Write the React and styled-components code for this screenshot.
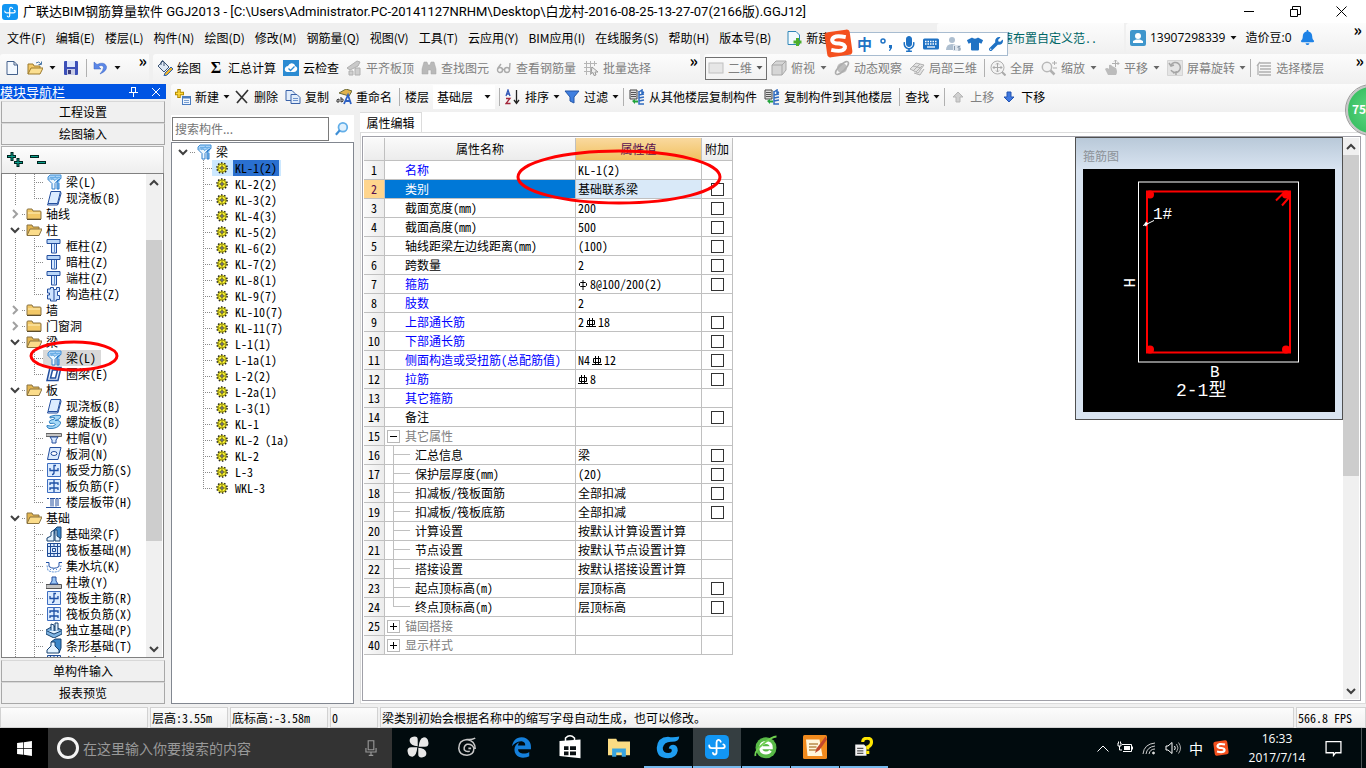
import React, { useState } from "react"
import styled, { createGlobalStyle, css } from "styled-components"
import {
  FaBell,
  FaEdgeLegacy,
  FaMicrophone,
  FaTshirt,
  FaWindows,
  FaWrench,
} from "react-icons/fa"

const song = css`
  font-family: "Noto Sans CJK SC", sans-serif;
  font-feature-settings: "hwid";
`

const dots = "#8a8a8a"

/* ---------- icons ---------- */

const glyphs = {
  app: (
    <>
      <rect width="16" height="16" rx="3" fill="#1296f3" />
      <path d="M10.500 4.500Q10 3 8.800 3.300 7.700 3.600 7.700 5V11.500Q7.700 13 6.500 13 5.500 13 5.300 12M2.800 7Q2.800 8.800 4.500 8.800H11.500Q13.200 8.800 13.200 7.500 13.200 6.500 12.200 6.300" fill="none" stroke="#fff" strokeWidth="1.200" strokeLinecap="round" />
    </>
  ),
  doc: <path d="M3 1.500h7l3.500 3.500v9.500H3zM10 1.500V5h3.500" fill="#f4f9ff" stroke="#44618c" />,
  open: (
    <>
      <path d="M1 14V4h5l1 2h6v3" fill="#f3c969" stroke="#9c7a2c" />
      <path d="M1 14L4 8h12l-3 6z" fill="#fbdf91" stroke="#9c7a2c" />
      <path d="M9 3q3-2.500 5 1M14.500 1.500V4.500H11.500" fill="none" stroke="#4a78a8" />
    </>
  ),
  save: (
    <>
      <rect x="1" y="1" width="14" height="14" rx="1" fill="#3c50b8" />
      <rect x="4" y="1" width="8" height="6" fill="#dfe8fb" />
      <rect x="4" y="9" width="8" height="6" fill="#c8cce6" />
      <rect x="5" y="10" width="3" height="4" fill="#3c3c78" />
    </>
  ),
  undo: <path d="M2 2v7h7L6.500 6.500Q11 4 11.500 7.500 11.500 10 8 14 15 11 14.500 6.500 12.500 1 5 4.500z" fill="#5b87e8" stroke="#3560c0" strokeWidth=".5" />,
  paint: (
    <>
      <path d="M1 6L6 1l6 6-5 5z" fill="#dfe9f5" stroke="#3d5575" />
      <path d="M4 5V2q2-3 3 0v4" fill="none" stroke="#3d5575" />
      <path d="M8 13l6-6 2 2-6 6-3 1z" fill="#f0b429" stroke="#2b62b0" />
    </>
  ),
  cloudCheck: (
    <>
      <rect width="16" height="16" fill="#2b8bd2" />
      <path d="M4 12q-3-1-2-4 1-2 3-2 2-4 6-2 1 1 1 2 3 1 2 4-1 2-3 2z" fill="#fff" />
      <path d="M5.500 8.500l2 2 4-4" fill="none" stroke="#2b8bd2" strokeWidth="1.300" />
    </>
  ),
  flush: (
    <>
      <path d="M1 8L11 1l3 1-2 4-8 4z" fill="#c9c9c9" stroke="#b0b0b0" />
      <path d="M3 11h4v4H3zM9 8h5v7H9z" fill="#cfcfcf" stroke="#b0b0b0" />
    </>
  ),
  binoculars: (
    <path d="M3 2h3l1 3h2l1-3h3l2 7v5h-5v-4H7v4H1V9z" fill="#b9b9b9" stroke="#a4a4a4" strokeWidth=".5" />
  ),
  glasses: (
    <g fill="none" stroke="#aaa" strokeWidth="1.400">
      <circle cx="4" cy="10" r="2.500" />
      <circle cx="11" cy="10" r="2.500" />
      <path d="M6.500 9.500h2M2 8l3-4M13.500 10L14 3" />
    </g>
  ),
  batch: (
    <>
      <path d="M1 3.500h13M1 7.500h9M1 11.500h7M3.500 1v14M7.500 1v14M11.500 1v5" stroke="#b5b5b5" fill="none" />
      <path d="M9 7l6 5h-3l1 3-2 .500-1-3-2 1z" fill="#eee" stroke="#999" />
    </>
  ),
  view2d: <rect x="1" y="3" width="14" height="10" fill="#e6e6e6" stroke="#c0c0c0" />,
  cube: (
    <path d="M1 5l4-4h10v9l-4 5H1zM1 5h10v10M11 5l4-4" fill="#d6d6d6" stroke="#a8a8a8" />
  ),
  orbit: (
    <>
      <circle cx="8" cy="8" r="5" fill="#bdbdbd" />
      <ellipse cx="8" cy="8" rx="8.500" ry="3" fill="none" stroke="#adadad" strokeWidth="1.500" transform="rotate(-45 8 8)" />
    </>
  ),
  partial: <path d="M1 9l6-6 8 2-6 8zM4 6l8 2M4 11l7-7M7 12l6-6M5 13l6 2 4-6" fill="#e2e2e2" stroke="#b0b0b0" />,
  full: (
    <>
      <circle cx="7.500" cy="7.500" r="6.500" fill="#f3f3f3" stroke="#b0b0b0" />
      <path d="M7.500 3v9M3 7.500h9M6 4.500L7.500 3 9 4.500M6 10.500l1.500 1.500L9 10.500M4.500 6L3 7.500 4.500 9M10.500 6L12 7.500 10.500 9" fill="none" stroke="#aaa" />
      <path d="M12 12l3.500 3.500" stroke="#aaa" strokeWidth="2" />
    </>
  ),
  zoomer: (
    <>
      <circle cx="6" cy="7" r="4.700" fill="#f3f3f3" stroke="#b8b8b8" strokeWidth="1.500" />
      <path d="M9.500 10.500l4 4" stroke="#b0b0b0" strokeWidth="2.500" />
      <path d="M11 3h5M13.500 1v4M12 8h4" stroke="#b0b0b0" />
    </>
  ),
  pan: (
    <>
      <path d="M1 9q2-2 4 0L5 5q2-1 3 1l4 2q2 4 0 7H4z" fill="#bcbcbc" />
      <path d="M11.500 0v7M8 3.500h7M10 1.500L11.500 0 13 1.500M13.500 2L15 3.500 13.500 5" fill="none" stroke="#b0b0b0" />
    </>
  ),
  rotate: (
    <>
      <path d="M.5.5h15v15H.5z" fill="#e4e4e4" stroke="#d4d4d4" />
      <path d="M4 10a5 5 0 1 0 0-5M2 3l2 3 3-1M6 13l3-1v3" fill="none" stroke="#a5a5a5" strokeWidth="1.500" />
    </>
  ),
  floors: (
    <path d="M4 3h11M4 6h11M4 9h11M3 12h12M3 15h12M1 6l3-4M2 5v10" fill="none" stroke="#b0b0b0" strokeWidth="1.300" />
  ),
  create: (
    <>
      <path d="M4 0v9M0 4.500h9" stroke="#b38a00" strokeWidth="3.500" />
      <path d="M4 1v7M1 4.500h7" stroke="#ffd93a" strokeWidth="1.500" />
      <rect x="7.500" y="7.500" width="8" height="8" fill="#eef5ff" stroke="#4a7cc0" />
      <path d="M8 8.500h7" stroke="#4a7cc0" strokeWidth="2" />
      <path d="M9 11.500h5M9 13.500h5" stroke="#7ba0d0" />
    </>
  ),
  remove: <path d="M2 2l11 12M14 1L3 14" stroke="#333" strokeWidth="1.700" fill="none" />,
  copy: (
    <>
      <path d="M1 1.500h6l3 3v7H1z" fill="#e2edfb" stroke="#3a62a8" />
      <path d="M6 5.500h6l3 3v6H6z" fill="#e2edfb" stroke="#3a62a8" />
      <path d="M8 9.500h5M8 11.500h5" stroke="#6d93cc" />
    </>
  ),
  rename: (
    <>
      <path d="M3 4l7-4 6 2-3 5z" fill="#e2b34a" stroke="#6b6b3a" />
      <path d="M1 13q-1-3 2-3v3zM5 8v5q3 0 2-3H5" fill="none" stroke="#333" />
      <path d="M8 15l4-9 3 9M9 12h5" fill="none" stroke="#2d61c4" strokeWidth="1.800" />
    </>
  ),
  sort: (
    <>
      <path d="M1 7l2-6 2 6M1.500 5h3" fill="none" stroke="#3055b5" strokeWidth="1.300" />
      <path d="M1 9.500h4L1 14.500h4.500" fill="none" stroke="#a3263a" strokeWidth="1.300" />
      <path d="M11.500 1v13M9 11l2.500 3.500L14 11" fill="none" stroke="#222" strokeWidth="1.300" />
    </>
  ),
  filter: <path d="M1 2h14l-5 6v6l-4-2V8z" fill="#3f7fe0" stroke="#2457a8" />,
  copyFrom: (
    <>
      <path d="M1 1h7v9H1z" fill="#ddd" stroke="#444" />
      <path d="M2 3.500h5M2 5.500h5M2 7.500h5" stroke="#555" />
      <path d="M10 3l3-2v3l2-1M10 6l5-1M10 9l5-1M10 12l5-1M10 2v13h5" fill="none" stroke="#2f6bc0" strokeWidth="1.500" />
      <path d="M3 12l3-2v1.500h3v2H6V15z" fill="#22a33c" />
    </>
  ),
  up: <path d="M8 3l5 5h-3v5H6V8H3z" fill="#d0d0d0" stroke="#b5b5b5" />,
  down: <path d="M8 13L3 8h3V3h4v5h3z" fill="#3f78e0" stroke="#2555b0" />,
  newFile: (
    <>
      <path d="M2 1.500h8l3.500 3.500v9.500H2z" fill="#f2fafe" stroke="#2f86b8" />
      <path d="M11.500 8v8M7.500 12h8" stroke="#4cae2c" strokeWidth="3" />
    </>
  ),
  user: (
    <>
      <rect width="16" height="16" rx="2" fill="#3f96cc" />
      <circle cx="8" cy="6" r="3" fill="#fff" />
      <path d="M3 13v-2l3-1.500h4l3 1.500v2z" fill="#fff" />
    </>
  ),
  folder: (
    <>
      <path d="M1 4q0-1 1-1h4l1 2h7q1 0 1 1v7H1z" fill="#f2c867" stroke="#8a7340" />
      <path d="M2 7h12" stroke="#fff0bd" />
      <path d="M1 13.500h14" stroke="#5c4d2c" />
    </>
  ),
  folderOpen: (
    <>
      <path d="M1 13V3h5l1 2h6v3" fill="#e4b650" stroke="#8a7340" />
      <path d="M1 13.500L4 7h12l-3 6.500z" fill="#fbdc8a" stroke="#8a7340" />
    </>
  ),
  beam: (
    <>
      <path d="M2 5.500V3l2-2h11v3.500L12 6l-1 1-5-2z" fill="#a9d2f7" stroke="#3f8fd6" />
      <path d="M2 5.500l4 4V15h3V9.500L12 6" fill="#eef8ff" stroke="#2f7fcc" />
      <path d="M4 3.500h10M5 6l5-4M8 7l5-4" stroke="#6aaee6" fill="none" />
      <path d="M14.500 4.500L11 8v7h2V9" stroke="#2f7fcc" fill="#7fbcf0" />
    </>
  ),
  slab: <path d="M5 1.500h9.500l-3 12H2zM2 13.500l-.500 1.500h10l.500-1.500M14.500 1.500l.500 2-3 11" fill="#dcecff" stroke="#244f9e" />,
  column: (
    <>
      <path d="M1 1.500h13v4H1z" fill="#b9d6f8" stroke="#244f9e" />
      <path d="M5.500 6v9h5V6" fill="#d8e9ff" stroke="#244f9e" />
      <path d="M8.500 6v8" stroke="#5a8ad0" />
    </>
  ),
  constColumn: (
    <path d="M4.500 1.500h3v2h3v-2h3v4h-2v4h2v4h-3v1.500h-6v-2h-3v-4h2v-2h-2v-4h3zM8 4v10" fill="#cfe4ff" stroke="#244f9e" />
  ),
  ring: <path d="M4 1.500h11l-3 13H1zM6.500 4h5l-2 8H4.500z" fill="#e5f1ff" stroke="#244f9e" strokeWidth="1.500" fillRule="evenodd" />,
  spiral: <path d="M4 2.500Q9 .5 14.500 1.500 15.500 5 9 6.500 15 6 14.500 9.500 12 15 3 14.500 0 13 1 11.500 8 13 9.500 10.500 8 8.500 4 9.500 2 7 5 6 9 5.500 9 4 7 3 4 4z" fill="#a5d9f8" stroke="#2f7fc0" />,
  cap: (
    <>
      <path d="M0 3.500h15.500v3H0z" fill="#c4c4c4" stroke="#666" />
      <path d="M4 7h8l-2 3v3H6v-3z" fill="#d8e9ff" stroke="#244f9e" />
    </>
  ),
  hole: (
    <>
      <path d="M4 1.500h11l-3 12H1.500z" fill="#dcecff" stroke="#244f9e" />
      <ellipse cx="8" cy="7.500" rx="3" ry="2" fill="#fff" stroke="#244f9e" />
    </>
  ),
  rebarS: (
    <>
      <path d="M1.500 1.500h13v13h-13z" fill="#dcecff" stroke="#3e6ec0" />
      <path d="M10 3.500H8v7q0 2-2 2M4 6v2.500h8V6" fill="none" stroke="#1d4fa5" strokeWidth="1.300" />
    </>
  ),
  rebarF: (
    <>
      <path d="M1.500 1.500h13v13h-13z" fill="#dcecff" stroke="#3e6ec0" />
      <path d="M8 2v12M4 7V5h8v2M4 12v-2h8v2" fill="none" stroke="#1d4fa5" strokeWidth="1.300" />
    </>
  ),
  strip: (
    <>
      <path d="M0 13.500h15M5 4.500h2v8M5 4.500v8M10 4.500v8M12 4v8" fill="none" stroke="#244f9e" />
      <path d="M1 4.500h15" stroke="#244f9e" strokeDasharray="2 1" />
    </>
  ),
  footBeam: (
    <>
      <path d="M7 5l4-4h4v11l-3 3" fill="#3a86c8" stroke="#16406e" />
      <path d="M1 15v-3l4-2V6l3-2v11zM9 4h2v6l3 2v3H9z" fill="#e2f2ff" stroke="#16406e" />
    </>
  ),
  raft: (
    <path d="M1.500 1.500h13v13h-13zM4.500 1v14M11.500 1v14M1 4.500h14M1 11.500h14M8 1v3M8 12v3M6.500 6.500h3v3h-3z" fill="#dcecff" stroke="#1f4c96" />
  ),
  sump: (
    <>
      <path d="M0 4.500h3v4q5 3.500 10 0v-4h3" fill="none" stroke="#1d4fa5" />
      <path d="M1 7.500l1 5q6 3 12 0l1-5" fill="none" stroke="#5a8fd6" strokeDasharray="2 1" />
      <path d="M4 11.500h8" stroke="#5a8fd6" strokeDasharray="1 2" />
    </>
  ),
  pier: (
    <>
      <path d="M0 10.500h15.500v4H0z" fill="#c4c4c4" stroke="#555" />
      <path d="M4 10l2-3V3h4v4l2 3z" fill="#9cc7f5" stroke="#244f9e" />
    </>
  ),
  isolated: (
    <>
      <path d="M0 8l7-4 9 4v4l-8 4-8-4z" fill="#7fb4e2" stroke="#16406e" />
      <path d="M5 8V2l3 1v6M9 9V1h3v7M1 9l7 3 7-3" fill="#e2f2ff" stroke="#16406e" />
    </>
  ),
  stripFoot: (
    <>
      <path d="M5 4l4-3h6v9l-2 5" fill="#3a86c8" stroke="#16406e" />
      <path d="M1 15v-3l4-4V4h4v4l4 4v3z" fill="#e2f2ff" stroke="#16406e" />
    </>
  ),
  gear: (
    <>
      <circle cx="8" cy="8" r="6.800" fill="#f7f23a" stroke="#222" strokeWidth="2" strokeDasharray="2 2.270" />
      <circle cx="8" cy="8" r="5.300" fill="#fff833" stroke="#5c5800" strokeWidth=".8" />
      <circle cx="8" cy="8" r="1.600" fill="#fff" stroke="#222" strokeWidth="1.400" />
      <path d="M8 3.500v2M8 10.500v2M3.500 8h2M10.500 8h2" stroke="#5c5800" />
    </>
  ),
  search: (
    <>
      <circle cx="9" cy="6" r="5" fill="#dff0fd" stroke="#62aee8" strokeWidth="2" />
      <path d="M5.500 9.500L1 14.500" stroke="#3f8fd6" strokeWidth="2.500" />
    </>
  ),
  /* taskbar */
  fan: (
    <g fill="#e8e8e8">
      <path d="M7.800 7.500V3Q8-.2 4.500.5 1.500 1 2 4 2.500 7 7.800 7.500z" />
      <path d="M8.500 7.800H13q3.200-.2 2.500-3.500Q15 .8 12 1 9 1.500 8.500 7.800z" />
      <path d="M8.200 8.500V13q-.2 3.200 3.300 2.500 3-.5 2.500-3.500-.5-3-5.800-3.500z" />
      <path d="M7.500 8.200H3Q-.2 8.400.5 11.700 1 15.200 4 15q3-.5 3.500-6.800z" />
    </g>
  ),
  swirl: (
    <path d="M14 1.500Q11 3 8 2.500 2 3 2 9q.500 5 6 5 5-.500 5-5-1-3.500-5-3-2.500 1-2 4 1.500 2 4 1M8 2.500q6 1 6 7M11 9H9" fill="none" stroke="#c8c8c8" strokeWidth="1.100" />
  ),
  store: (
    <>
      <path d="M1 4l14-1v12.500L1 14z" fill="#fff" />
      <path d="M5 4V2q3-3 6 0v2" fill="none" stroke="#fff" />
      <path d="M4 7.500h3v2.500H4zM8 7.500h4v2.500H8zM4 11h3v2.500H4zM8 11h4v2.500H8z" fill="#0a1013" />
    </>
  ),
  explorer: (
    <>
      <path d="M0 2h6l1 2h9v10H0z" fill="#fbdc83" />
      <path d="M3 15V9h10v6h-3v-3H6v3z" fill="#38a4e0" />
    </>
  ),
  cloudG: (
    <path d="M15.500 1q0 3.500-5 3.500-5-.300-6 4 0 3.500 3.800 3.500 2 0 2.200-1.500.200-1.500-2-1.500.500-2.500 3-2.500 3 .300 3 4-1 5-6.500 5Q.5 15.500.5 8.500 1 1.500 8 1.200q3.500.800 7.500-.200z" fill="#1e9df0" />
  ),
  browser: (
    <>
      <circle cx="8" cy="8.500" r="7" fill="#58b947" />
      <path d="M4.500 8.500h7q0-3.500-3.500-3.500t-3.500 3.500q0 3.500 3.500 3.500 2 0 3-1.500" fill="none" stroke="#fff" strokeWidth="2" />
      <path d="M1 14Q0 11 6 6T15 1" stroke="#6fd04f" strokeWidth="1.200" fill="none" />
    </>
  ),
  notes: (
    <>
      <rect width="16" height="16" rx="1" fill="#f08a1d" />
      <path d="M2 3h9l2 11H3z" fill="#fff6dc" />
      <path d="M4 6h6M4 8h5M4 10h5" stroke="#b98a4a" />
      <path d="M15 1L9 9l-1 3 3-2 5-7z" fill="#c2482c" />
    </>
  ),
  help: (
    <>
      <path d="M1 6h7l2 2v7H1z" fill="#f2f2f2" />
      <path d="M2.500 9h5M2.500 11h5M2.500 13h5" stroke="#555" />
      <path d="M7 4q0-3 3.500-3Q14 1 14 4t-3 4v2M11 11v2.500" fill="none" stroke="#ffe600" strokeWidth="2.500" />
    </>
  ),
  battery: (
    <>
      <path d="M5 4.500h9.500v7H6" fill="none" stroke="#fff" />
      <path d="M7 6h6v4H7zM15 6.500h1v3h-1z" fill="#fff" />
      <path d="M1 3v3h3V3M2.500 6v4H5M1.500 1.500v2M3.500 1.500v2" fill="none" stroke="#fff" />
    </>
  ),
  wifi: (
    <g fill="none" stroke="#cfcfcf">
      <path d="M2 14Q3 4 14 3M5 14Q6 7 14 6M8 14q1-5 6-5" />
      <circle cx="12.500" cy="13" r="1" fill="#fff" />
    </g>
  ),
  sound: (
    <g fill="none" stroke="#fff">
      <path d="M1 6h2l4-3.500v11L3 10H1zM9.500 6q1.500 2 0 4" />
      <path d="M11.500 4q3 4 0 8M13.500 2.500q4 5.500 0 11" stroke="#aaa" />
    </g>
  ),
  sogou: (
    <>
      <rect x="1" y="1" width="14" height="14" rx="2" fill="#f4501e" transform="rotate(-8 8 8)" />
      <path d="M12 4.500Q5 3 4.500 6q0 2 4 2 3.500.500 3 2.500-1 2.500-7.500 1" fill="none" stroke="#fff" strokeWidth="2.200" />
    </>
  ),
  notice: <path d="M1 1.500h14v10.500h-5l-2 2.500V12H1z" fill="none" stroke="#fff" strokeWidth="1.200" />,
  mic: <path d="M5.500 1.500h5v8h-5zM3.500 8v3.500h9V8M8 12v2.500M6 14.500h4" fill="none" stroke="#999" />,
  keyboard: (
    <>
      <rect y="2.500" width="16" height="11" rx="1.500" fill="#1f72c4" />
      <path d="M2 5.500h12M2 8h12" stroke="#fff" strokeDasharray="1.500 1" strokeWidth="1.300" />
      <path d="M4 11h8" stroke="#fff" strokeWidth="1.300" />
    </>
  ),
  account: (
    <>
      <circle cx="7" cy="4" r="3" fill="#aebfd0" />
      <path d="M1 14q0-6 6-6 3 0 5 2v4z" fill="#aebfd0" />
      <rect x="8" y="9" width="8" height="6" fill="#dfe6ee" />
      <path d="M9.500 10v4M15 10.500h-2v1.500h2v2h-2" fill="none" stroke="#8799ac" />
    </>
  ),
}

const Icon = ({ name, size = 16 }) => (
  <Svg width={size} height={size} viewBox="0 0 16 16" aria-hidden="true">
    {glyphs[name]}
  </Svg>
)

const Caret = ({ color = "#111" }) => (
  <Svg width="7" height="4" viewBox="0 0 7 4" aria-hidden="true">
    <path d="M0.500 0h6L3.500 3.500z" fill={color} />
  </Svg>
)

const Chevron = ({ dir, color = "#404040", width = 2 }) => (
  <Svg width="10" height="10" viewBox="0 0 10 10" aria-hidden="true">
    <path
      d={{ down: "M1 3l4 4 4-4", up: "M1 7l4-4 4 4", right: "M3 1l4 4-4 4" }[dir]}
      fill="none"
      stroke={color}
      strokeWidth={width}
    />
  </Svg>
)

// reinforcement grade marks: plain bar and ribbed bar
const Bar = ({ ribbed }) => (
  <Svg width="10" height="11" viewBox="0 0 10 11" aria-hidden="true">
    <path
      d={ribbed ? "M1.500 3.500h7v4h-7zM0 9.500h10M3.500 1v8M6.500 1v8" : "M2.500 3.500h5l1 1v2l-1 1h-5l-1-1v-2zM5 1v10"}
      fill="none"
      stroke="#000"
    />
  </Svg>
)

/* ---------- data ---------- */

const menus = [
  "文件(F)", "编辑(E)", "楼层(L)", "构件(N)", "绘图(D)", "修改(M)", "钢筋量(Q)", "视图(V)",
  "工具(T)", "云应用(Y)", "BIM应用(I)", "在线服务(S)", "帮助(H)", "版本号(B)",
]

const drawTools = [
  { icon: "paint", label: "绘图" },
  { sigma: true, label: "汇总计算" },
  { icon: "cloudCheck", label: "云检查" },
  { icon: "flush", label: "平齐板顶", off: true },
  { icon: "binoculars", label: "查找图元", off: true },
  { icon: "glasses", label: "查看钢筋量", off: true },
  { icon: "batch", label: "批量选择", off: true },
]

const viewTools = [
  { icon: "cube", label: "俯视", menu: true },
  { icon: "orbit", label: "动态观察" },
  { icon: "partial", label: "局部三维" },
  { divider: true },
  { icon: "full", label: "全屏" },
  { icon: "zoomer", label: "缩放", menu: true },
  { icon: "pan", label: "平移", menu: true },
  { icon: "rotate", label: "屏幕旋转", menu: true, tight: true },
  { divider: true },
  { icon: "floors", label: "选择楼层" },
]

const moduleTree = [
  { icon: "beam", label: "梁(L)" },
  { icon: "slab", label: "现浇板(B)", last: true },
  { folder: true, label: "轴线" },
  { folder: true, open: true, label: "柱" },
  { icon: "column", label: "框柱(Z)" },
  { icon: "column", label: "暗柱(Z)" },
  { icon: "column", label: "端柱(Z)" },
  { icon: "constColumn", label: "构造柱(Z)", last: true },
  { folder: true, label: "墙" },
  { folder: true, label: "门窗洞" },
  { folder: true, open: true, label: "梁" },
  { icon: "beam", label: "梁(L)", selected: true },
  { icon: "ring", label: "圈梁(E)", last: true },
  { folder: true, open: true, label: "板" },
  { icon: "slab", label: "现浇板(B)" },
  { icon: "spiral", label: "螺旋板(B)" },
  { icon: "cap", label: "柱帽(V)" },
  { icon: "hole", label: "板洞(N)" },
  { icon: "rebarS", label: "板受力筋(S)" },
  { icon: "rebarF", label: "板负筋(F)" },
  { icon: "strip", label: "楼层板带(H)", last: true },
  { folder: true, open: true, label: "基础" },
  { icon: "footBeam", label: "基础梁(F)" },
  { icon: "raft", label: "筏板基础(M)" },
  { icon: "sump", label: "集水坑(K)" },
  { icon: "pier", label: "柱墩(Y)" },
  { icon: "rebarS", label: "筏板主筋(R)" },
  { icon: "rebarF", label: "筏板负筋(X)" },
  { icon: "isolated", label: "独立基础(P)" },
  { icon: "stripFoot", label: "条形基础(T)" },
  { icon: "raft", label: "桩承台(V)" },
]

const members = [
  "KL-1(2)", "KL-2(2)", "KL-3(2)", "KL-4(3)", "KL-5(2)", "KL-6(2)", "KL-7(2)", "KL-8(1)",
  "KL-9(7)", "KL-10(7)", "KL-11(7)", "L-1(1)", "L-1a(1)", "L-2(2)", "L-2a(1)", "L-3(1)",
  "KL-1", "KL-2 (1a)", "KL-2", "L-3", "WKL-3",
]

const properties = [
  { no: 1, name: "名称", value: "KL-1(2)", key: true },
  { no: 2, name: "类别", value: "基础联系梁", box: true, active: true },
  { no: 3, name: "截面宽度(mm)", value: "200", box: true },
  { no: 4, name: "截面高度(mm)", value: "500", box: true },
  { no: 5, name: "轴线距梁左边线距离(mm)", value: "(100)", box: true },
  { no: 6, name: "跨数量", value: "2", box: true },
  { no: 7, name: "箍筋", value: <><Bar />8@100/200(2)</>, box: true, key: true },
  { no: 8, name: "肢数", value: "2", key: true },
  { no: 9, name: "上部通长筋", value: <>2<Bar ribbed />18</>, box: true, key: true },
  { no: 10, name: "下部通长筋", value: "", box: true, key: true },
  { no: 11, name: "侧面构造或受扭筋(总配筋值)", value: <>N4<Bar ribbed />12</>, box: true, key: true },
  { no: 12, name: "拉筋", value: <><Bar ribbed />8</>, box: true, key: true },
  { no: 13, name: "其它箍筋", value: "", key: true },
  { no: 14, name: "备注", value: "", box: true },
  { no: 15, name: "其它属性", group: "open" },
  { no: 16, name: "汇总信息", value: "梁", box: true, child: true },
  { no: 17, name: "保护层厚度(mm)", value: "(20)", box: true, child: true },
  { no: 18, name: "扣减板/筏板面筋", value: "全部扣减", box: true, child: true },
  { no: 19, name: "扣减板/筏板底筋", value: "全部扣减", box: true, child: true },
  { no: 20, name: "计算设置", value: "按默认计算设置计算", child: true },
  { no: 21, name: "节点设置", value: "按默认节点设置计算", child: true },
  { no: 22, name: "搭接设置", value: "按默认搭接设置计算", child: true },
  { no: 23, name: "起点顶标高(m)", value: "层顶标高", box: true, child: true },
  { no: 24, name: "终点顶标高(m)", value: "层顶标高", box: true, child: true, last: true },
  { no: 25, name: "锚固搭接", group: "closed" },
  { no: 40, name: "显示样式", group: "closed" },
]

const tasks = [
  { icon: "store", size: 24 },
  { icon: "explorer", size: 22 },
  { icon: "cloudG", size: 24, running: true },
  { icon: "app", size: 24, running: true, active: true },
  { icon: "browser", size: 24, running: true },
  { icon: "notes", size: 24, running: true },
  { icon: "help", size: 20, running: true },
]

/* ---------- parts ---------- */

const Tool = ({ icon, sigma, label, off, menu, tight }) => (
  <ToolButton $off={off} $tight={tight}>
    {sigma && <Sigma>Σ</Sigma>}
    {icon && <Icon name={icon} />}
    {label}
    {menu && (
      <CaretSlot $tight={tight}>
        <Caret color={off ? "#666" : "#111"} />
      </CaretSlot>
    )}
  </ToolButton>
)

const Scroll = ({ start, size }) => (
  <ScrollTrack>
    <ScrollArrow><Chevron dir="up" /></ScrollArrow>
    <ScrollSpace $grow={start} />
    <ScrollThumb $grow={size} />
    <ScrollSpace $grow={100 - start - size} />
    <ScrollArrow><Chevron dir="down" /></ScrollArrow>
  </ScrollTrack>
)

const ModulePanel = () => (
  <Modules>
    <ModulesHead>
      模块导航栏
      <HeadActions>
        <Svg width="9" height="10" viewBox="0 0 9 10">
          <path d="M2.500 0v5M6.500 0v5M2 .5h5M0 5.500h9M4.500 6v4" stroke="#fff" fill="none" />
        </Svg>
        <Svg width="8" height="8" viewBox="0 0 8 8">
          <path d="M0 0l8 8M8 0L0 8" stroke="#fff" fill="none" />
        </Svg>
      </HeadActions>
    </ModulesHead>
    <StackButtons>
      <StackButton>工程设置</StackButton>
      <StackButton>绘图输入</StackButton>
    </StackButtons>
    <ExpandBar>
      <Svg width="16" height="16" viewBox="0 0 16 16">
        <path d="M5 0v9M0 4.500h9M11 6v9M7 10.500h9" stroke="#00241f" strokeWidth="3" />
        <path d="M5 1v7M1 4.500h7M11 7v7M8 10.500h7" stroke="#0aa08c" />
      </Svg>
      <Svg width="16" height="16" viewBox="0 0 16 16">
        <path d="M0 4.500h9M7 10.500h9" stroke="#00241f" strokeWidth="3" />
        <path d="M1 4.500h7M8 10.500h7" stroke="#0aa08c" />
      </Svg>
    </ExpandBar>
    <TreeFrame>
      <TreeRows>
        {moduleTree.map((node, i) =>
          node.folder ? (
            <FolderRow key={i}>
              <Toggle>
                <Chevron dir={node.open ? "down" : "right"} color={node.open ? "#404040" : "#a0a0a0"} />
              </Toggle>
              <Branch $w={4} />
              <Icon name={node.open ? "folderOpen" : "folder"} />
              {node.label}
            </FolderRow>
          ) : (
            <LeafRow key={i}>
              <Rail />
              <Branch $w={9} $rail $last={node.last} />
              <LeafBody $selected={node.selected}>
                <Icon name={node.icon} />
                {node.label}
              </LeafBody>
            </LeafRow>
          )
        )}
      </TreeRows>
      <Scroll start={11} size={67} />
    </TreeFrame>
    <StackButtons>
      <StackButton>单构件输入</StackButton>
      <StackButton>报表预览</StackButton>
    </StackButtons>
    <ModuleMark viewBox="0 0 90 32" aria-hidden="true">
      <ellipse cx="45" cy="16" rx="43" ry="14" />
    </ModuleMark>
  </Modules>
)

const MemberPanel = () => {
  const [selected, setSelected] = useState(0)

  return (
    <Members>
      <SearchRow>
        <SearchInput placeholder="搜索构件..." aria-label="搜索构件" />
        <SearchButton aria-label="搜索"><Icon name="search" size={14} /></SearchButton>
      </SearchRow>
      <MemberTree>
        <MemberRoot>
          <Toggle><Chevron dir="down" /></Toggle>
          <Branch $w={6} />
          <Icon name="beam" />
          梁
        </MemberRoot>
        {members.map((name, i) => (
          <MemberRow key={i} onClick={() => setSelected(i)}>
            <Branch $w={9} $rail $last={i === members.length - 1} />
            <MemberBody $selected={i === selected}>
              <Icon name="gear" size={12} />
              <MemberName $selected={i === selected}>{name}</MemberName>
            </MemberBody>
          </MemberRow>
        ))}
      </MemberTree>
    </Members>
  )
}

const StirrupWindow = () => (
  <Stirrup>
    <StirrupTitle>箍筋图</StirrupTitle>
    <StirrupCanvas viewBox="0 0 252 242">
      <rect x="55.500" y="12.500" width="160" height="180" fill="none" stroke="#fff" />
      <rect x="64" y="22" width="143" height="161" fill="none" stroke="#f00" strokeWidth="2" />
      <g fill="#f00">
        <circle cx="67" cy="25" r="4" />
        <circle cx="203" cy="25" r="4" />
        <circle cx="67" cy="180" r="4" />
        <circle cx="203" cy="180" r="4" />
      </g>
      <path d="M200 24l-7 7M206 28l-7 8" stroke="#f00" strokeWidth="2" />
      <path d="M60 56l3-1 8-4" stroke="#fff" fill="none" />
      <path d="M63 52l2 2-2 3-2-2z" fill="#fff" />
      <StirrupText>
        <text x="70" y="49" fontSize="16">1#</text>
        <text x="127" y="207" fontSize="16">B</text>
        <text x="93" y="226" fontSize="18">2-1型</text>
        <text transform="translate(52 118) rotate(-90)" fontSize="16">H</text>
      </StirrupText>
    </StirrupCanvas>
  </Stirrup>
)

const PropertyPanel = () => (
  <Properties>
    <Tabs role="tablist">
      <Tab role="tab" aria-selected="true">属性编辑</Tab>
    </Tabs>
    <Sheet>
      <SheetFrame>
        <Grid>
          <colgroup>
            <col width="21" />
            <col width="191" />
            <col width="126" />
            <col width="31" />
          </colgroup>
          <thead>
            <tr>
              <Head />
              <Head>属性名称</Head>
              <Head $active>属性值</Head>
              <Head>附加</Head>
            </tr>
          </thead>
          <tbody>
            {properties.map(p => (
              <tr key={p.no}>
                <RowNumber $active={p.active}>{p.no}</RowNumber>
                <NameCell $active={p.active} $key={p.key} $group={p.group}>
                  <NameFlow>
                    {p.group && (
                      <Expander aria-label={p.name}>
                        <Svg width="9" height="9" viewBox="0 0 9 9">
                          <path d={p.group === "open" ? "M1 4.500h7" : "M1 4.500h7M4.500 1v7"} stroke="#000" />
                        </Svg>
                      </Expander>
                    )}
                    {p.child && <Elbow $last={p.last} />}
                    {!p.group && !p.child && <Indent />}
                    {p.name}
                  </NameFlow>
                </NameCell>
                <ValueCell $active={p.active}>
                  <ValueFlow>{p.value}</ValueFlow>
                </ValueCell>
                <BoxCell>
                  {p.box && <Box type="checkbox" aria-label={p.name} />}
                </BoxCell>
              </tr>
            ))}
          </tbody>
        </Grid>
        <Scroll start={0} size={61} />
        <StirrupWindow />
        <PropertyMark viewBox="0 0 206 58" aria-hidden="true">
          <ellipse cx="103" cy="29" rx="101" ry="26" />
        </PropertyMark>
      </SheetFrame>
    </Sheet>
  </Properties>
)

const App = () => (
  <Screen>
    <GlobalStyle />
    <TitleBar>
      <Icon name="app" />
      <WindowTitle>
        广联达BIM钢筋算量软件 GGJ2013 - [C:\Users\Administrator.PC-20141127NRHM\Desktop\白龙村-2016-08-25-13-27-07(2166版).GGJ12]
      </WindowTitle>
      <WindowButton aria-label="最小化">
        <Svg width="11" height="11"><path d="M0 5.500h10" stroke="#000" /></Svg>
      </WindowButton>
      <WindowButton aria-label="还原">
        <Svg width="11" height="11">
          <path d="M.5 3.500h7v7h-7zM2.500 3V.5h8v8H8" fill="none" stroke="#000" />
        </Svg>
      </WindowButton>
      <WindowButton aria-label="关闭">
        <Svg width="11" height="11"><path d="M.5.5l10 10M10.500.5l-10 10" stroke="#000" /></Svg>
      </WindowButton>
    </TitleBar>

    <MenuBar>
      <MenuGroup>
        {menus.map(m => <MenuItem key={m}>{m}</MenuItem>)}
        <VersionTool><Tool icon="newFile" label="新建" /></VersionTool>
      </MenuGroup>
      <TipStrip><a href="#tip">快速布置自定义范..</a></TipStrip>
      <AccountStrip>
        <Icon name="user" />
        13907298339
        <CaretSlot><Caret /></CaretSlot>
        <Beans>造价豆:0</Beans>
        <FaBell size={15} color="#1e82e6" />
        <More>»</More>
      </AccountStrip>
    </MenuBar>

    <ToolBar>
      <Strip $w={149}>
        <IconButton aria-label="新建"><Icon name="doc" /></IconButton>
        <IconButton aria-label="打开"><Icon name="open" /><Caret /></IconButton>
        <IconButton aria-label="保存"><Icon name="save" /></IconButton>
        <Divider />
        <IconButton aria-label="撤销"><Icon name="undo" /><Caret /></IconButton>
        <More>»</More>
      </Strip>
      <Strip $w={547}>
        {drawTools.map(t => <Tool key={t.label} {...t} />)}
        <More>»</More>
      </Strip>
      <Strip $grow>
        <ViewMode>
          <Icon name="view2d" />
          二维
          <Caret color="#555" />
        </ViewMode>
        {viewTools.map((t, i) => t.divider ? <Divider key={i} /> : <Tool key={i} off {...t} />)}
        <More>»</More>
      </Strip>
    </ToolBar>

    <Work>
      <ModulePanel />
      <Editor>
        <EditBar>
          <Tool icon="create" label="新建" menu tight />
          <Tool icon="remove" label="删除" />
          <Tool icon="copy" label="复制" />
          <Tool icon="rename" label="重命名" />
          <Divider />
          <FloorLabel htmlFor="floor">楼层</FloorLabel>
          <FloorPick>
            <FloorSelect id="floor" defaultValue="base">
              <option value="base">基础层</option>
            </FloorSelect>
            <Caret />
          </FloorPick>
          <Divider />
          <Tool icon="sort" label="排序" menu tight />
          <Tool icon="filter" label="过滤" menu tight />
          <Divider />
          <Tool icon="copyFrom" label="从其他楼层复制构件" />
          <Tool icon="copyFrom" label="复制构件到其他楼层" />
          <Divider />
          <Tool label="查找" menu tight />
          <Divider />
          <Tool icon="up" label="上移" off />
          <Tool icon="down" label="下移" />
        </EditBar>
        <Panels>
          <MemberPanel />
          <PropertyPanel />
        </Panels>
      </Editor>
    </Work>

    <StatusBar>
      <StatusCell $w={148} />
      <StatusCell $w={78}>层高:3.55m</StatusCell>
      <StatusCell $w={98}>底标高:-3.58m</StatusCell>
      <StatusCell $w={48}>0</StatusCell>
      <StatusMessage>梁类别初始会根据名称中的缩写字母自动生成，也可以修改。</StatusMessage>
      <StatusCell $w={70}>566.8 FPS</StatusCell>
    </StatusBar>

    <TaskBar>
      <StartButton aria-label="开始"><FaWindows size={17} color="#fff" /></StartButton>
      <Cortana>
        <Ring />
        <CortanaInput placeholder="在这里输入你要搜索的内容" aria-label="搜索" />
        <Icon name="mic" size={18} />
      </Cortana>
      <TaskGroup>
        <TaskButton><Icon name="fan" size={22} /></TaskButton>
        <TaskButton><Icon name="swirl" size={22} /></TaskButton>
      </TaskGroup>
      <TaskGroup>
        <TaskButton><FaEdgeLegacy size={21} color="#1580dc" /></TaskButton>
        {tasks.map(t => (
          <TaskButton key={t.icon} $running={t.running} $active={t.active}>
            <Icon name={t.icon} size={t.size} />
          </TaskButton>
        ))}
      </TaskGroup>
      <Tray>
        <Svg width="12" height="7"><path d="M.5 6.500L6 1l5.500 5.500" stroke="#fff" fill="none" /></Svg>
        <Icon name="battery" />
        <Icon name="wifi" />
        <Icon name="sound" />
        <Ime>中</Ime>
        <Icon name="sogou" />
      </Tray>
      <Clock>
        <span>16:33</span>
        <span>2017/7/14</span>
      </Clock>
      <NoticeButton aria-label="通知"><Icon name="notice" size={17} /></NoticeButton>
      <ShowDesktop />
    </TaskBar>

    <SogouBar>
      <SogouLogo><Icon name="sogou" size={29} /></SogouLogo>
      <SogouMode>中</SogouMode>
      <Svg width="16" height="16" viewBox="0 0 16 16">
        <circle cx="4" cy="5" r="2" fill="none" stroke="#1f72c4" strokeWidth="1.500" />
        <path d="M10 9h3v3l-2 3h-1l1-3h-1z" fill="#1f72c4" />
      </Svg>
      <FaMicrophone size={16} color="#1f72c4" />
      <Icon name="keyboard" />
      <Icon name="account" />
      <FaTshirt size={16} color="#1f72c4" />
      <FaWrench size={14} color="#1f72c4" />
    </SogouBar>

    <Speed>75</Speed>
  </Screen>
)

export default App

const GlobalStyle = createGlobalStyle`
  * {
    box-sizing: border-box;
  }

  body {
    margin: 0;
    background: #f0f0f0;
  }

  button, input, select {
    margin: 0;
    padding: 0;
    border: 0;
    background: none;
    color: inherit;
    font: inherit;
  }
`

const Svg = styled.svg`
  flex: none;
  display: block;
`

const Screen = styled.div`
  position: relative;
  display: flex;
  flex-direction: column;
  height: 100vh;
  overflow: hidden;
  background: #f0f0f0;
  color: #000;
  font-family: "Noto Sans CJK SC", sans-serif;
  font-size: 12px;
  line-height: 16px;
  white-space: nowrap;
`

const TitleBar = styled.header`
  display: flex;
  align-items: center;
  height: 23px;
  padding: 0 2px;
  background: #fff;
`

const WindowTitle = styled.h1`
  flex: 1;
  margin: 0;
  padding-left: 5px;
  overflow: hidden;
  font-family: Roboto, "Noto Sans CJK SC", sans-serif;
  font-size: 13px;
  font-weight: 400;
`

const WindowButton = styled.button`
  display: flex;
  align-items: center;
  justify-content: center;
  width: 46px;
  height: 23px;
`

const barFill = css`
  background: linear-gradient(#fcfcfc, #f0f0f0);
  border-radius: 3px 0 0 3px;
`

const MenuBar = styled.nav`
  display: flex;
  height: 31px;
`

const MenuGroup = styled.div`
  display: flex;
  align-items: center;
  flex: 1;
  min-width: 0;
  overflow: hidden;
  padding: 0 0 2px 2px;
`

const MenuItem = styled.button`
  padding: 0 5px;
`

const VersionTool = styled.span`
  padding-left: 10px;
`

const TipStrip = styled.div`
  ${song}
  ${barFill}
  display: flex;
  align-items: center;
  width: 187px;
  margin-right: 2px;
  padding: 0 0 2px 52px;

  a {
    color: #066;
    text-decoration: none;
  }
`

const AccountStrip = styled.div`
  ${barFill}
  display: flex;
  align-items: center;
  gap: 4px;
  width: 240px;
  padding: 0 2px 2px 4px;
  font-family: "Open Sans", "Noto Sans CJK SC", sans-serif;
`

const Beans = styled.span`
  padding: 0 4px;
`

const More = styled.span`
  align-self: flex-start;
  margin-left: auto;
  padding-right: 2px;
  font-family: "Noto Sans CJK SC", sans-serif;
  font-size: 16px;
  font-weight: 700;
  line-height: 12px;
`

const ToolBar = styled.div`
  display: flex;
  gap: 4px;
  height: 30px;
`

const Strip = styled.div`
  ${barFill}
  display: flex;
  align-items: center;
  padding: 0 0 2px 4px;
  width: ${p => (p.$w ? `${p.$w}px` : "auto")};
  flex: ${p => (p.$grow ? 1 : "none")};
  min-width: 0;
`

const ToolButton = styled.button`
  display: flex;
  align-items: center;
  flex: none;
  gap: 4px;
  height: 24px;
  padding-right: ${p => (p.$tight ? 4 : 7)}px;
  color: ${p => (p.$off ? "#808080" : "#000")};
`

const CaretSlot = styled.span`
  display: flex;
  padding-left: ${p => (p.$tight ? 0 : 1)}px;
`

const IconButton = styled.button`
  display: flex;
  align-items: center;
  gap: 6px;
  height: 24px;
  padding-right: 7px;
`

const Sigma = styled.span`
  width: 16px;
  font-family: "Liberation Serif", serif;
  font-size: 16px;
  font-weight: 700;
  text-align: center;
`

const Divider = styled.span`
  flex: none;
  width: 1px;
  height: 18px;
  margin-right: 5px;
  background: #b0b0b0;
`

const ViewMode = styled.button`
  display: flex;
  align-items: center;
  gap: 4px;
  height: 23px;
  margin-right: 4px;
  margin-left: -3px;
  padding: 0 3px 0 2px;
  border: 1px solid #707070;
  color: #808080;
`

const Work = styled.div`
  display: flex;
  flex: 1;
  min-height: 0;
  gap: 5px;
`

const Modules = styled.aside`
  ${song}
  position: relative;
  display: flex;
  flex-direction: column;
  flex: none;
  width: 166px;
  background: #f0f0f0;
`

const ModulesHead = styled.div`
  display: flex;
  align-items: center;
  justify-content: space-between;
  height: 15px;
  background: #0054e3;
  color: #fff;
  font-size: 13px;
  line-height: 15px;
`

const HeadActions = styled.span`
  display: flex;
  align-items: center;
  gap: 14px;
  padding-right: 6px;
`

const StackButtons = styled.div`
  display: flex;
  flex-direction: column;
  padding: 2px 1px 0;
`

const StackButton = styled.button`
  height: 22px;
  border: 1px solid #a8a8a8;
  border-top-color: #d8d8d8;
  background: #f0f0f0;
`

const ExpandBar = styled.div`
  display: flex;
  align-items: center;
  gap: 7px;
  height: 27px;
  margin: 1px 2px 0 1px;
  padding: 0 5px;
  border: 1px solid #b0b0b0;
  border-width: 1px 1px 0;
  background: linear-gradient(#fdfdfd, #eeeeee);
`

const TreeFrame = styled.div`
  display: flex;
  flex: 1;
  min-height: 0;
  margin: 0 2px 0 1px;
  padding-right: 1px;
  border: 1px solid #808080;
  background: #fff;
  overflow: hidden;
`

const TreeRows = styled.div`
  flex: 1;
  min-width: 0;
  overflow: hidden;
`

const TreeRow = styled.div`
  display: flex;
  align-items: center;
  height: 16px;
`

const FolderRow = styled(TreeRow)`
  padding-left: 6px;

  & > svg:last-of-type {
    margin-right: 4px;
  }
`

const LeafRow = styled(TreeRow)`
  padding-left: 13px;
`

const Toggle = styled.button`
  display: flex;
  justify-content: center;
  width: 14px;
`

const Rail = styled.span`
  width: 19px;
  height: 16px;
  background: repeating-linear-gradient(${dots} 0 1px, transparent 1px 2px) left / 1px 100% no-repeat;
`

const Branch = styled.span`
  flex: none;
  width: ${p => p.$w}px;
  height: 16px;
  background:
    repeating-linear-gradient(90deg, ${dots} 0 1px, transparent 1px 2px) left 8px / 100% 1px no-repeat
    ${p => p.$rail && css`,
    repeating-linear-gradient(${dots} 0 1px, transparent 1px 2px) left top / 1px ${p.$last ? "50%" : "100%"} no-repeat`};
`

const LeafBody = styled.span`
  display: flex;
  align-items: center;
  gap: 4px;
  height: 16px;
  padding: 0 5px 0 3px;
  background: ${p => (p.$selected ? "#d9d9d9" : "transparent")};
`

const ScrollTrack = styled.div`
  display: flex;
  flex-direction: column;
  flex: none;
  width: 16px;
  background: #f0f0f0;
`

const ScrollArrow = styled.button`
  display: flex;
  align-items: center;
  justify-content: center;
  height: 17px;
`

const ScrollSpace = styled.div`
  flex: ${p => p.$grow} 0 0;
`

const ScrollThumb = styled.div`
  flex: ${p => p.$grow} 0 0;
  background: #cdcdcd;
`

const mark = css`
  position: absolute;
  fill: none;
  stroke: #f00;
  stroke-width: 3;
  pointer-events: none;
`

const ModuleMark = styled.svg`
  ${mark}
  top: 256px;
  left: 29px;
  width: 90px;
  height: 32px;
`

const Editor = styled.main`
  display: flex;
  flex-direction: column;
  flex: 1;
  min-width: 0;
`

const EditBar = styled.div`
  ${barFill}
  display: flex;
  align-items: center;
  height: 28px;
  padding: 0 0 2px 4px;
`

const FloorLabel = styled.label`
  padding-right: 4px;
`

const FloorPick = styled.span`
  display: flex;
  align-items: center;
  width: 62px;
  height: 24px;
  margin-right: 4px;
  padding: 0 4px;
  background: #fff;
`

const FloorSelect = styled.select`
  flex: 1;
  min-width: 0;
  appearance: none;
  outline: 0;
`

const Panels = styled.div`
  display: flex;
  flex: 1;
  min-height: 0;
  gap: 6px;
`

const Members = styled.section`
  ${song}
  display: flex;
  flex-direction: column;
  flex: none;
  width: 183px;
  padding-top: 3px;
`

const SearchRow = styled.div`
  display: flex;
  height: 27px;
  padding: 2px 0 1px 1px;
  background: #fff;
`

const SearchInput = styled.input`
  width: 157px;
  padding: 0 2px;
  border: 1px solid #7a7a7a;
  font-feature-settings: normal;

  &::placeholder {
    color: #757575;
  }
`

const SearchButton = styled.button`
  display: flex;
  align-items: center;
  justify-content: center;
  flex: 1;
`

const MemberTree = styled.div`
  flex: 1;
  min-height: 0;
  padding-top: 1px;
  border: 1px solid #828790;
  background: #fff;
  overflow: hidden;
`

const MemberRoot = styled(TreeRow)`
  padding-left: 4px;

  & > svg:last-of-type {
    margin-right: 4px;
  }
`

const MemberRow = styled(TreeRow)`
  padding-left: 31px;
`

const MemberBody = styled.span`
  display: flex;
  align-items: center;
  gap: 5px;
  height: 16px;
  padding: 0 2px 0 4px;
  background: ${p => (p.$selected ? "#cce8ff" : "transparent")};
`

const MemberName = styled.span`
  height: 16px;
  padding: 0 2px;
  background: ${p => (p.$selected ? "#2a70d0" : "transparent")};
`

const Properties = styled.section`
  ${song}
  display: flex;
  flex-direction: column;
  flex: 1;
  min-width: 0;
`

const Tabs = styled.div`
  height: 20px;
  background: #fff;
`

const Tab = styled.button`
  height: 20px;
  width: 62px;
  border-top: 1px solid #dcdcdc;
  border-right: 1px solid #dcdcdc;
  background: #fff;
`

const Sheet = styled.div`
  display: flex;
  flex: 1;
  min-height: 0;
  padding: 3px 4px 2px 1px;
  border: 1px solid #dcdcdc;
  background: #fff;
`

const SheetFrame = styled.div`
  position: relative;
  display: flex;
  align-items: stretch;
  justify-content: space-between;
  flex: 1;
  padding: 1px;
  border: 1px solid #a0a0a8;
`

const Grid = styled.table`
  align-self: flex-start;
  table-layout: fixed;
  width: 369px;
  border-spacing: 0;
`

const cell = css`
  height: 19px;
  padding: 0;
  border-right: 1px solid #c0c0c0;
  border-bottom: 1px solid #c0c0c0;
  font-weight: 400;
  line-height: 18px;
`

const Head = styled.th`
  ${cell}
  height: 23px;
  background: ${p => (p.$active ? "linear-gradient(#f9d99f, #f1c15f)" : "linear-gradient(#fafafa, #ececec)")};
  color: ${p => (p.$active ? "#5a1050" : "#000")};
`

const RowNumber = styled.th`
  ${cell}
  background: ${p => (p.$active ? "#ffd58d" : "linear-gradient(90deg, #fafafa, #ececec)")};
  color: ${p => (p.$active ? "#5a1050" : "#000")};
`

const NameCell = styled.td`
  ${cell}
  background: ${p => (p.$active ? "#0078d7" : "#fff")};
  color: ${p => (p.$active ? "#fff" : p.$group ? "#808080" : p.$key ? "#00f" : "#000")};
`

const NameFlow = styled.div`
  display: flex;
  align-items: center;
  height: 18px;
`

const Indent = styled.span`
  width: 20px;
`

const Expander = styled.button`
  display: flex;
  align-items: center;
  justify-content: center;
  width: 13px;
  height: 13px;
  margin: 0 5px 0 2px;
  border: 1px solid #b8b8b8;
`

const Elbow = styled.span`
  align-self: flex-start;
  width: 17px;
  height: ${p => (p.$last ? 9 : 19)}px;
  margin: 0 5px 0 8px;
  background:
    linear-gradient(#c0c0c0, #c0c0c0) left top / 1px 100% no-repeat,
    linear-gradient(#c0c0c0, #c0c0c0) left 8px / 100% 1px no-repeat;
`

const ValueCell = styled.td`
  ${cell}
  padding-left: 2px;
  background: ${p => (p.$active ? "#d9e9f8" : "#fff")};
`

const ValueFlow = styled.div`
  display: flex;
  align-items: center;
  gap: 2px;
  height: 18px;
`

const BoxCell = styled.td`
  ${cell}
`

const Box = styled.input`
  appearance: none;
  display: block;
  width: 13px;
  height: 13px;
  margin: 0 auto;
  border: 1px solid #333;
  background: #fff;
`

const Stirrup = styled.section`
  position: absolute;
  top: 0;
  right: 17px;
  display: flex;
  flex-direction: column;
  width: 268px;
  height: 283px;
  padding: 9px 7px 7px;
  border: 1px solid #505050;
  background: linear-gradient(#b9c9d9, #d9e4f1 32px);
`

const StirrupTitle = styled.h2`
  margin: 0;
  padding-bottom: 4px;
  color: #8c9298;
  font-size: 12px;
  font-weight: 400;
  line-height: 18px;
`

const StirrupCanvas = styled.svg`
  display: block;
  flex: 1;
  min-height: 0;
  background: #000;
`

const StirrupText = styled.g`
  fill: #fff;
  font-family: "Liberation Mono", "Noto Sans CJK SC", monospace;
`

const PropertyMark = styled.svg`
  ${mark}
  top: 11px;
  left: 153px;
  width: 206px;
  height: 58px;
`

const StatusBar = styled.footer`
  ${song}
  display: flex;
  gap: 2px;
  height: 24px;
  padding-top: 3px;
`

const StatusCell = styled.div`
  flex: none;
  width: ${p => p.$w}px;
  border: 1px solid #d2d2d2;
  background: linear-gradient(#fcfcfc, #f0f0f0);
  padding-left: 1px;
  line-height: 19px;
`

// keeps its punctuation full width
const StatusMessage = styled(StatusCell)`
  flex: 1;
  width: auto;
  font-feature-settings: normal;
`

const TaskBar = styled.footer`
  display: flex;
  height: 40px;
  background: #010b0e;
  color: #fff;
`

const StartButton = styled.button`
  display: flex;
  align-items: center;
  justify-content: center;
  width: 48px;
  background: #000;
`

const Cortana = styled.div`
  display: flex;
  align-items: center;
  width: 344px;
  padding: 0 12px 0 9px;
  background: #333;
`

const Ring = styled.span`
  width: 22px;
  height: 22px;
  border: 3px solid #f4f4f4;
  border-radius: 50%;
`

const CortanaInput = styled.input`
  flex: 1;
  padding-left: 4px;
  font-size: 14px;

  &::placeholder {
    color: #999;
  }
`

const TaskGroup = styled.div`
  display: flex;
  gap: 1px;
  padding-left: 2px;

  & + & {
    padding-left: 6px;
  }
`

const TaskButton = styled.button`
  display: flex;
  align-items: center;
  justify-content: center;
  width: 48px;
  border-bottom: 2px solid ${p => (p.$running ? "#76b9ed" : "transparent")};
  background: ${p => (p.$active ? "#353e41" : "transparent")};
`

const Tray = styled.div`
  display: flex;
  align-items: center;
  gap: 8px;
  margin-left: auto;
  padding-right: 11px;
`

const Ime = styled.span`
  width: 16px;
  font-size: 14px;
`

const Clock = styled.time`
  display: flex;
  flex-direction: column;
  align-items: center;
  justify-content: center;
  width: 74px;
  font-family: "Open Sans", "Noto Sans CJK SC", sans-serif;
  line-height: 19px;
`

const NoticeButton = styled.button`
  display: flex;
  align-items: center;
  justify-content: center;
  width: 38px;
`

const ShowDesktop = styled.span`
  width: 5px;
  margin-left: 9px;
  border-left: 1px solid #4c5456;
`

const SogouBar = styled.div`
  position: absolute;
  top: 32px;
  left: 838px;
  display: flex;
  align-items: center;
  gap: 6px;
  height: 24px;
  padding: 0 4px 0 18px;
  border: 1px solid #a8bcd0;
  background: #fff;
`

const SogouLogo = styled.span`
  position: absolute;
  top: -4px;
  left: -15px;
`

const SogouMode = styled.span`
  width: 16px;
  color: #1f72c4;
  font-size: 15px;
  font-weight: 700;
`

const Speed = styled.div`
  position: absolute;
  top: 85px;
  right: -30px;
  width: 50px;
  height: 50px;
  padding-left: 4px;
  border: 2px solid #c8c8c8;
  border-radius: 50%;
  outline: 1px solid #999;
  background: radial-gradient(#5fd884, #2db757);
  color: #fff;
  font-weight: 700;
  line-height: 44px;
`
